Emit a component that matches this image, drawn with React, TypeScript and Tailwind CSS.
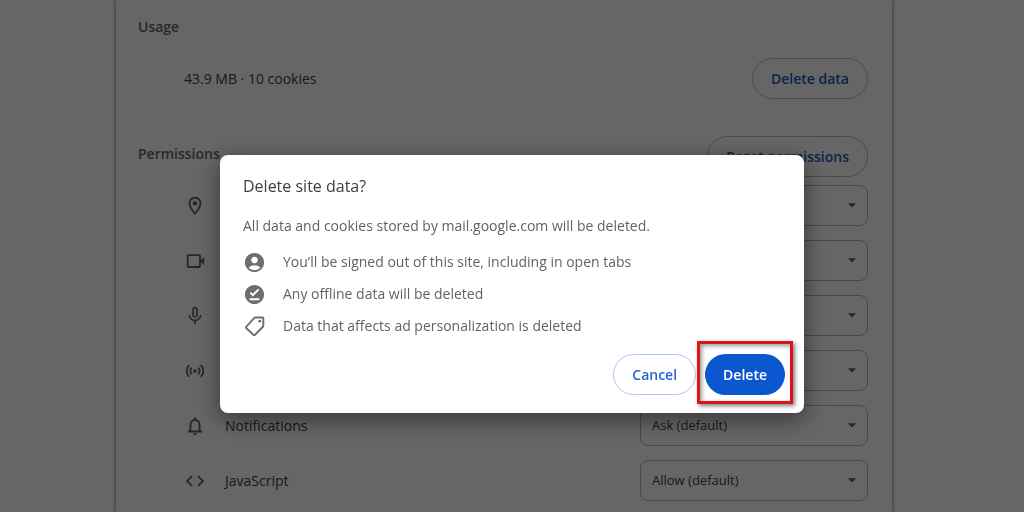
import type { SVGProps } from "react";
import {
  MdAccountCircle,
  MdArrowDropDown,
  MdCode,
  MdMicNone,
  MdNotificationsNone,
  MdOfflinePin,
  MdOutlineLocationOn,
  MdOutlineSensors,
} from "react-icons/md";

function CameraIcon(props: SVGProps<SVGSVGElement>) {
  return (
    <svg viewBox="0 0 24 24" fill="none" {...props}>
      <rect x="4" y="5.5" width="13.5" height="13" rx="0.8" stroke="currentColor" strokeWidth="2" />
      <path d="M17.5 12L22 7.5V16.5Z" fill="currentColor" />
    </svg>
  );
}

function TagIcon(props: SVGProps<SVGSVGElement>) {
  return (
    <svg viewBox="0 0 24 24" fill="none" {...props}>
      <path
        d="M12.8 2.6H20.2Q21.2 2.6 21.2 3.6V11.2Q21.2 11.8 20.7 12.3L12.6 20.6Q11.7 21.4 10.8 20.6L3.6 13.8Q2.7 13 3.5 12.1L11.6 3.2Q12.1 2.6 12.8 2.6Z"
        stroke="currentColor"
        strokeWidth="2"
        strokeLinejoin="round"
      />
      <circle cx="17.5" cy="6.4" r="1.5" fill="currentColor" />
    </svg>
  );
}

const permissions = [
  { id: "location", label: "Location", icon: MdOutlineLocationOn, value: "Ask (default)" },
  { id: "camera", label: "Camera", icon: CameraIcon, value: "Ask (default)" },
  { id: "microphone", label: "Microphone", icon: MdMicNone, value: "Ask (default)" },
  { id: "sensors", label: "Sensors", icon: MdOutlineSensors, value: "Allow (default)" },
  { id: "notifications", label: "Notifications", icon: MdNotificationsNone, value: "Ask (default)" },
  { id: "javascript", label: "JavaScript", icon: MdCode, value: "Allow (default)" },
];

const effects = [
  { text: "You’ll be signed out of this site, including in open tabs", icon: MdAccountCircle },
  { text: "Any offline data will be deleted", icon: MdOfflinePin },
  { text: "Data that affects ad personalization is deleted", icon: TagIcon },
];

const outlineButton =
  "h-[41px] rounded-full border px-[18px] text-sm font-semibold";

function SiteSettings() {
  return (
    <main className="min-h-screen pr-4">
      <div className="mx-auto min-h-screen max-w-[776px] bg-white pt-3 pr-6 pb-3 pl-[22px] shadow-[0_0_4px_rgba(0,0,0,0.6)]">
        <h2 className="text-sm leading-[30px] font-semibold text-[#5f6368]">Usage</h2>
        <div className="mt-4 flex items-center justify-between pl-[46px]">
          <span className="text-sm text-[#3c4043]">43.9 MB · 10 cookies</span>
          <button className={`${outlineButton} border-[#b4b8e0] text-[#2458b8]`}>Delete data</button>
        </div>

        <div className="mt-[37px] flex items-start justify-between">
          <h2 className="text-sm leading-9 font-semibold text-[#5f6368]">Permissions</h2>
          <button className={`${outlineButton} border-[#b4b8e0] text-[#2458b8]`}>Reset permissions</button>
        </div>

        <ul className="mt-2 flex flex-col gap-[14px]">
          {permissions.map(({ id, label, icon: Icon, value }) => (
            <li key={id} className="flex items-center pl-[46px]">
              <Icon className="size-[22px] text-[#5f6368]" />
              <label htmlFor={id} className="ml-[19px] flex-1 text-sm text-[#3c4043]">
                {label}
              </label>
              <div className="relative">
                <select
                  id={id}
                  defaultValue={value}
                  className="h-[41px] w-[228px] appearance-none rounded-lg border border-[#b4b7b5] bg-transparent pl-[11px] text-[13px] text-[#3c4043]"
                >
                  <option>{value}</option>
                  <option>Allow</option>
                  <option>Block</option>
                </select>
                <MdArrowDropDown className="pointer-events-none absolute top-2.5 right-1.5 size-5 text-[#5f6368]" />
              </div>
            </li>
          ))}
        </ul>
      </div>
    </main>
  );
}

function DeleteDialog() {
  return (
    <div className="fixed inset-0 flex items-start justify-center bg-black/60 pt-[155px]">
      <div
        role="dialog"
        aria-labelledby="dialog-title"
        className="w-full max-w-[584px] rounded-lg bg-white pt-[19px] pr-[19px] pb-[18px] pl-[23px] text-sm text-[#5f6368] shadow-[0_6px_24px_rgba(0,0,0,0.5)]"
      >
        <h1 id="dialog-title" className="text-base leading-6 text-[#3c4043]">
          Delete site data?
        </h1>
        <p className="mt-4 leading-6">
          All data and cookies stored by mail.google.com will be deleted.
        </p>
        <ul className="mt-2">
          {effects.map(({ text, icon: Icon }) => (
            <li key={text} className="flex h-8 items-center gap-[17px]">
              <Icon className="size-[23px] text-[#6e6e6e]" />
              {text}
            </li>
          ))}
        </ul>
        <div className="mt-3 flex justify-end gap-[9px]">
          <button className={`${outlineButton} border-[#a8c7fa] text-[#2464d6]`}>Cancel</button>
          <div className="relative">
            <button className="h-[41px] rounded-full bg-[#0b57d0] px-[18px] text-sm font-semibold text-white">
              Delete
            </button>
            {/* Highlight frame */}
            <div className="pointer-events-none absolute -inset-x-2 -top-[13px] -bottom-[9px] border-3 border-[#e01217] shadow-[2px_2px_4px_rgba(0,0,0,0.5),inset_2px_2px_4px_rgba(0,0,0,0.4)]" />
          </div>
        </div>
      </div>
    </div>
  );
}

export default function App() {
  return (
    <div className="h-screen overflow-hidden bg-white font-['Open_Sans','Noto_Sans',sans-serif]">
      <SiteSettings />
      <DeleteDialog />
    </div>
  );
}
